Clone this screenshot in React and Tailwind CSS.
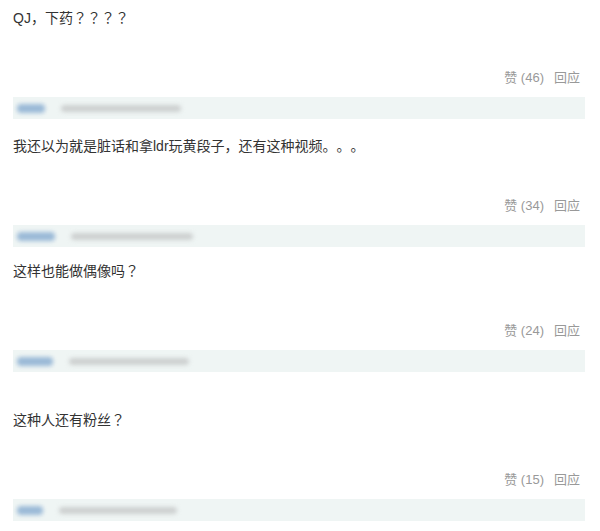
import React from "react";

const comments = [
  { text: "QJ，下药？？？？", likes: 46, mt: "mt-[8px]", nameW: "w-[28px]", dateW: "w-[120px]" },
  { text: "我还以为就是脏话和拿ldr玩黄段子，还有这种视频。。。", likes: 34, mt: "mt-[17px]", nameW: "w-[38px]", dateW: "w-[122px]" },
  { text: "这样也能做偶像吗？", likes: 24, mt: "mt-[14px]", nameW: "w-[36px]", dateW: "w-[120px]" },
  { text: "这种人还有粉丝？", likes: 15, mt: "mt-[38px]", nameW: "w-[26px]", dateW: "w-[118px]" },
];

export default function App() {
  return (
    <div
      className="w-[600px] h-[531px] bg-white overflow-hidden px-[13px] [text-spacing-trim:space-all]"
      style={{ fontFamily: '"Liberation Sans", "Noto Sans CJK KR", "Noto Sans CJK SC", sans-serif' }}
    >
      {comments.map((c, i) => (
        <div key={i} className={c.mt}>
          <div className="text-[14px] leading-[20px] text-[#333]">{c.text}</div>
          <div className="mt-[41px] flex justify-end gap-[10px] pr-[7px] text-[13px] leading-[18px] text-[#999]">
            <span>赞 ({c.likes})</span>
            <span>回应</span>
          </div>
          <div className="mt-[10px] h-[22px] w-[572px] bg-[#eff5f4] flex items-center gap-[16px] pl-[4px] overflow-hidden">
            <span className={`${c.nameW} h-[9px] rounded-sm bg-[#86abd0] blur-[2px] opacity-80`} />
            <span className={`${c.dateW} h-[7px] rounded-sm bg-[#cdd0d0] blur-[2px]`} />
          </div>
        </div>
      ))}
    </div>
  );
}
